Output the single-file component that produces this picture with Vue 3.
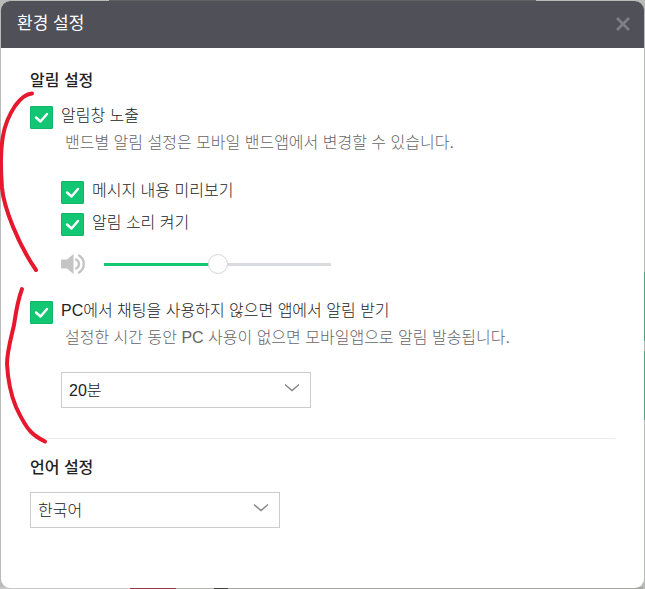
<template>
  <div class="page">
    <main class="dialog">
      <header class="dialog-header">
        <h1>환경 설정</h1>
        <button type="button" class="close" aria-label="닫기">
          <svg width="16" height="16" viewBox="0 0 16 16">
            <path d="M2 2L14 14M14 2L2 14" />
          </svg>
        </button>
      </header>

      <div class="dialog-body">
        <section class="alarm">
          <h2>알림 설정</h2>

          <div v-for="group in groups" :key="group.id" class="group">
            <div class="option">
              <span class="check">
                <input :id="group.id" v-model="group.checked" type="checkbox" />
                <svg viewBox="0 0 23 23"><path d="M6 11.5L10.500 15.500L17 8" /></svg>
              </span>
              <label :for="group.id">{{ group.label }}</label>
            </div>
            <p class="desc">{{ group.desc }}</p>

            <div v-if="group.children" class="sub">
              <div v-for="item in group.children" :key="item.id" class="option">
                <span class="check">
                  <input :id="item.id" v-model="item.checked" type="checkbox" />
                  <svg viewBox="0 0 23 23"><path d="M6 11.5L10.500 15.500L17 8" /></svg>
                </span>
                <label :for="item.id">{{ item.label }}</label>
              </div>

              <div class="volume">
                <label for="volume" aria-label="알림 소리 크기">
                  <svg width="25" height="22" viewBox="0 0 25 22">
                    <path class="speaker" d="M1 6.5H6L12.5 1V21L6 15.5H1Q0 15.5 0 14.5V7.5Q0 6.5 1 6.5Z" />
                    <path class="wave" d="M15 6.5Q18 8 18 11T15 15.5" />
                    <path class="wave" d="M18 2.5Q22.800 5.500 22.800 11T18 19.500" />
                  </svg>
                </label>
                <input
                  id="volume"
                  v-model="volume"
                  type="range"
                  min="0"
                  max="100"
                  :style="{ '--level': volume + '%' }"
                />
              </div>
            </div>

            <div v-else class="select delay">
              <select v-model="delay" aria-label="알림 받기 시간">
                <option v-for="m in delays" :key="m" :value="m">{{ m }}분</option>
              </select>
              <svg width="16" height="10" viewBox="0 0 16 10"><path d="M1 1.500L8 7.500L15 1.500" /></svg>
            </div>
          </div>
        </section>

        <section class="language">
          <h2><label for="language">언어 설정</label></h2>
          <div class="select">
            <select id="language" v-model="language">
              <option value="ko">한국어</option>
            </select>
            <svg width="16" height="10" viewBox="0 0 16 10"><path d="M1 1.500L8 7.500L15 1.500" /></svg>
          </div>
        </section>
      </div>
    </main>

    <!-- Hand-drawn marks over the two alarm groups -->
    <svg class="marks" width="60" height="460" viewBox="0 0 60 460">
      <path d="M32 93.500C25 94 20 99 15 106C9 115 5 124 3 136C0 153 1 175 2 188C4 208 18 244 36 270" />
      <path d="M22 289C19 297 16 311 14 325C10 342 7 352 7 364C8 382 11 395 16 407C22 420 27 428 31 432C35 436 40 439 45 441.500" />
    </svg>
  </div>
</template>

<script setup>
import { ref } from "vue";

const volume = ref(50);
const delay = ref(20);
const delays = [20];
const language = ref("ko");

// Top level options, each with its own sub settings
const groups = ref([
  {
    id: "popup",
    label: "알림창 노출",
    desc: "밴드별 알림 설정은 모바일 밴드앱에서 변경할 수 있습니다.",
    checked: true,
    children: [
      { id: "preview", label: "메시지 내용 미리보기", checked: true },
      { id: "sound", label: "알림 소리 켜기", checked: true },
    ],
  },
  {
    id: "mobile",
    label: "PC에서 채팅을 사용하지 않으면 앱에서 알림 받기",
    desc: "설정한 시간 동안 PC 사용이 없으면 모바일앱으로 알림 발송됩니다.",
    checked: true,
  },
]);
</script>

<style>
body {
  background: #b9bbb9;
}
</style>

<style scoped>
* {
  box-sizing: border-box;
}

.page {
  position: relative;
  display: flex;
  min-height: 100vh;
  padding: 1px;
  font-family: "Liberation Sans", "Noto Sans CJK KR", sans-serif;
  font-size: 16px;
  font-weight: 300;
  line-height: 24px;
  color: #222;
  background:
    linear-gradient(90deg, #b9bbb9 109px, #606163 109px 536px, #b9bbb9 536px) top / 100% 2px no-repeat,
    linear-gradient(#b9bbb9 272px, #53a07b 272px 341px, #b9bbb9 341px 351px, #53a07b 351px 420px, #b9bbb9 420px) right / 2px 100% no-repeat,
    linear-gradient(90deg, #c8c8c8 130px, #8f3940 130px 176px, #b0b2a8 176px 214px, #46413f 214px 228px, #a5a69d 228px) bottom / 100% 2px no-repeat,
    #b9bbb9;
}

.dialog {
  flex: 1;
  border-radius: 9px;
  overflow: hidden;
  background: #fff;
}

.dialog-header {
  display: flex;
  align-items: center;
  justify-content: space-between;
  height: 47px;
  padding: 0 13px 2px 16px;
  background: #505059;
}

h1,
h2,
p {
  margin: 0;
}

h1 {
  color: #fff;
  font-size: 17px;
  font-weight: 400;
}

h2 {
  font-size: 16px;
  font-weight: 500;
}

.close {
  display: flex;
  padding: 0;
  border: 0;
  background: none;
  cursor: pointer;
}

.close path {
  fill: none;
  stroke: #7f7f84;
  stroke-width: 2.6;
}

.dialog-body {
  padding: 21px 29px;
}

.alarm {
  padding-bottom: 30px;
  border-bottom: 1px solid #eaeaea;
}

.group {
  margin-top: 11px;
}

.group + .group {
  margin-top: 23px;
}

.option {
  display: flex;
  align-items: flex-start;
  gap: 8px;
}

.check {
  display: grid;
  width: 23px;
  height: 23px;
  margin-top: 2px;
}

.check input,
.check svg {
  grid-area: 1 / 1;
  width: 23px;
  height: 23px;
}

.check input {
  appearance: none;
  margin: 0;
  border: 1px solid #c8c8c8;
  border-radius: 1px;
}

.check input:checked {
  border-color: #0fb668;
  background: #13c673;
}

.check svg {
  fill: none;
  stroke: #fff;
  stroke-width: 2.4;
  stroke-linecap: round;
  stroke-linejoin: round;
  pointer-events: none;
}

.desc {
  margin-top: 2px;
  padding-left: 35px;
  color: #666;
}

.sub {
  display: grid;
  gap: 7px;
  margin: 24px 0 0 31px;
}

.volume {
  display: flex;
  align-items: center;
  gap: 18px;
  height: 24px;
  margin-top: 9px;
}

.volume label {
  display: flex;
}

.speaker {
  fill: #c4c4c4;
}

.wave {
  fill: none;
  stroke: #c4c4c4;
  stroke-width: 2.4;
  stroke-linecap: round;
}

.volume input {
  appearance: none;
  width: 227px;
  height: 20px;
  margin: 0;
  background: linear-gradient(90deg, #13c673 var(--level), #d8dce0 var(--level)) center / 100% 3px no-repeat;
}

.volume input::-webkit-slider-thumb {
  appearance: none;
  width: 20px;
  height: 20px;
  border: 1px solid #d5d5d5;
  border-radius: 50%;
  background: #fff;
}

.select {
  position: relative;
  width: 250px;
}

.delay {
  margin: 22px 0 0 31px;
}

.select select {
  display: block;
  appearance: none;
  width: 100%;
  height: 36px;
  padding: 2px 7px 0;
  border: 1px solid #ccc;
  border-radius: 0;
  background: #fff;
  color: #222;
  font: inherit;
}

.select svg {
  position: absolute;
  top: 11px;
  right: 11px;
  fill: none;
  stroke: #858585;
  stroke-width: 1.4;
  pointer-events: none;
}

.language {
  padding-top: 17px;
}

.language .select {
  margin-top: 12px;
}

.marks {
  position: absolute;
  top: 0;
  left: 0;
  fill: none;
  stroke: #e5182d;
  stroke-width: 4;
  stroke-linecap: round;
  stroke-linejoin: round;
  pointer-events: none;
}
</style>
